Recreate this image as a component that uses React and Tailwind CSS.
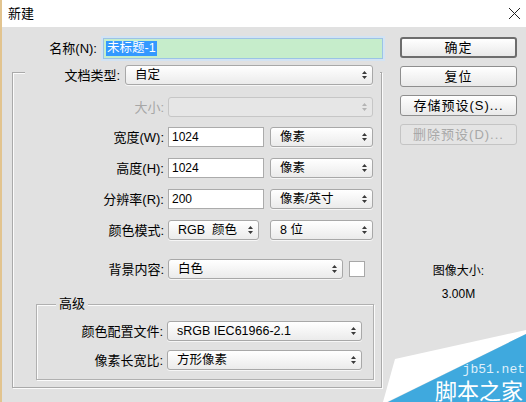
import React from "react";

// small up/down spinner arrow used at the right of every select
function Arrows({ disabled }) {
  return (
    <svg width="5" height="8" viewBox="0 0 5 8" className="shrink-0">
      <path d="M2.5 0 L5 3 L0 3 Z M0 5 L5 5 L2.5 8 Z" fill={disabled ? "#b4b4b4" : "#3a3a3a"} />
    </svg>
  );
}

function Select({ value, w, disabled }) {
  return (
    <div
      className={`${w} h-[20px] shrink-0 flex items-center justify-between pl-[9px] pr-[5px] rounded-[3px] border ${
        disabled
          ? "border-[#c6c6c6] bg-[#e6e6e6]"
          : "border-[#a8a8a8] bg-linear-to-b from-white to-[#ebebeb] shadow-[0_1px_0_#f6f6f6]"
      }`}
    >
      <span className="text-[12.5px] leading-none whitespace-pre">{value}</span>
      <Arrows disabled={disabled} />
    </div>
  );
}

function Input({ value, w }) {
  return (
    <div className={`${w} h-[20px] shrink-0 flex items-center pl-[3px] bg-white border border-[#ababab]`}>
      <span className="text-[12px] leading-none">{value}</span>
    </div>
  );
}

function Label({ children, w, gray }) {
  return (
    <div className={`${w} shrink-0 text-right leading-none whitespace-nowrap ${gray ? "text-[#a6a6a6]" : "text-black"}`}>
      {children}
    </div>
  );
}

function Button({ children, primary, disabled }) {
  return (
    <div
      className={`h-[21px] w-[117px] flex items-center justify-center rounded-[3px] leading-none tracking-[1px] ${
        primary
          ? "border-2 border-[#6d6d6d] bg-linear-to-b from-white to-[#e9e9e9]"
          : disabled
          ? "border border-[#c4c4c4] bg-[#e4e4e4] text-[#a8a8a8]"
          : "border border-[#8e8e8e] bg-linear-to-b from-white to-[#e9e9e9]"
      }`}
    >
      {children}
    </div>
  );
}

export default function App() {
  return (
    <div className="w-[526px] h-[402px] relative overflow-hidden bg-[#e1e1e1] border-l-2 border-[#e2c48f] text-[13px] text-black font-['Liberation_Sans','Noto_Sans_CJK_SC',sans-serif]">
      {/* title bar */}
      <div className="h-[27px] bg-white flex items-center justify-between pl-[6px] pr-[5px]">
        <span className="leading-none">新建</span>
        <svg width="13" height="13" viewBox="0 0 13 13">
          <path d="M1 1 L12 12 M12 1 L1 12" stroke="#222" strokeWidth="1" />
        </svg>
      </div>

      <div className="flex">
        {/* left side */}
        <div className="w-[396px] shrink-0">
          <div className="flex items-center mt-[11px] h-[20px]">
            <Label w="w-[95px]">名称(N):</Label>
            <div className="ml-[6px] w-[280px] h-[21px] flex items-center pl-[2px] bg-[#c6edcb] border border-[#9cc3e6] shadow-[0_0_0_2px_#d3e3f3]">
              <span className="bg-[#3399ff] text-white text-[12.5px] leading-[15px] px-[1px]">未标题-1</span>
            </div>
          </div>

          {/* main group box */}
          <div className="ml-[10px] mt-[14px] w-[370px] h-[316px] border border-[#a9a9a9] shadow-[inset_1px_1px_0_#fbfbfb,1px_1px_0_#fbfbfb]">
            <div className="-mt-[8px] ml-[12px] w-[355px] pr-[7px] flex items-center bg-[#e1e1e1]">
              <Label w="w-[95px]">文档类型:</Label>
              <div className="ml-[5px]">
                <Select value="自定" w="w-[248px]" />
              </div>
            </div>

            <div className="mt-[12px] flex items-center">
              <Label w="w-[151px]" gray>大小:</Label>
              <div className="ml-[4px]">
                <Select value="" w="w-[205px]" disabled />
              </div>
            </div>

            <div className="mt-[10px] flex items-center gap-[6px]">
              <div className="flex items-center gap-[4px]">
                <Label w="w-[151px]">宽度(W):</Label>
                <Input value="1024" w="w-[96px]" />
              </div>
              <Select value="像素" w="w-[103px]" />
            </div>

            <div className="mt-[11px] flex items-center gap-[6px]">
              <div className="flex items-center gap-[4px]">
                <Label w="w-[151px]">高度(H):</Label>
                <Input value="1024" w="w-[96px]" />
              </div>
              <Select value="像素" w="w-[103px]" />
            </div>

            <div className="mt-[11px] flex items-center gap-[6px]">
              <div className="flex items-center gap-[4px]">
                <Label w="w-[151px]">分辨率(R):</Label>
                <Input value="200" w="w-[96px]" />
              </div>
              <Select value="像素/英寸" w="w-[103px]" />
            </div>

            <div className="mt-[11px] flex items-center gap-[11px]">
              <div className="flex items-center gap-[4px]">
                <Label w="w-[151px]">颜色模式:</Label>
                <Select value="RGB  颜色" w="w-[91px]" />
              </div>
              <Select value="8 位" w="w-[103px]" />
            </div>

            <div className="mt-[19px] flex items-center gap-[6px]">
              <div className="flex items-center gap-[4px]">
                <Label w="w-[151px]">背景内容:</Label>
                <Select value="白色" w="w-[175px]" />
              </div>
              <div className="w-[16px] h-[16px] bg-white border border-[#a8a8a8]" />
            </div>

            {/* 高级 group */}
            <div className="relative ml-[23px] mt-[25px] w-[338px] h-[76px] border border-[#b0b0b0] shadow-[inset_1px_1px_0_#fbfbfb,1px_1px_0_#fbfbfb]">
              <span className="absolute -top-[8px] left-[19px] px-[3px] bg-[#e1e1e1] leading-none">高级</span>
              <div className="mt-[16px] flex items-center gap-[4px]">
                <Label w="w-[126px]">颜色配置文件:</Label>
                <Select value="sRGB IEC61966-2.1" w="w-[195px]" />
              </div>
              <div className="mt-[9px] flex items-center gap-[4px]">
                <Label w="w-[126px]">像素长宽比:</Label>
                <Select value="方形像素" w="w-[195px]" />
              </div>
            </div>
          </div>
        </div>

        {/* right side */}
        <div className="ml-[2px] mt-[10px] w-[117px] flex flex-col gap-[8px]">
          <Button primary>确定</Button>
          <Button>复位</Button>
          <Button>存储预设(S)...</Button>
          <Button disabled>删除预设(D)...</Button>
          <div className="mt-[112px] flex flex-col items-center leading-none text-[12px]">
            <span>图像大小:</span>
            <span className="mt-[11px]">3.00M</span>
          </div>
        </div>
      </div>

      {/* watermark */}
      <svg width="143" height="73" viewBox="0 0 143 73" className="absolute right-0 bottom-0">
        <polygon points="12,30 143,1 143,5 4,73 0,73" fill="#ffffff" />
        <polygon points="143,5 143,73 5,73" fill="#3fa9de" />
      </svg>
      <span className="absolute right-[1px] bottom-[26px] text-[13px] leading-[13px] text-[#dff0fb] font-['Liberation_Mono',monospace]">jb51.net</span>
      <span className="absolute right-[3px] bottom-0 text-[22px] leading-[26px] text-white font-['Noto_Sans_CJK_SC',sans-serif]">脚本之家</span>
    </div>
  );
}
